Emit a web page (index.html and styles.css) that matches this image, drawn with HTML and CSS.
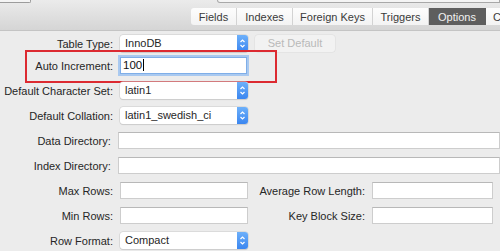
FILE: index.html
```html
<!DOCTYPE html>
<html lang="en">
<head>
  <meta charset="UTF-8">
  <title>Table Options</title>
  <link rel="stylesheet" href="styles.css">
</head>
<body>
  <div class="window">
    <div class="toolbar">
      <div class="toolbar-top">
        <span class="stub stub-left"></span>
        <span class="stub stub-search"></span>
      </div>
      <div class="tabs">
        <span class="tab">Fields</span>
        <span class="tab">Indexes</span>
        <span class="tab">Foreign Keys</span>
        <span class="tab">Triggers</span>
        <span class="tab active">Options</span>
        <span class="tab">CREATE Syntax</span>
      </div>
    </div>

    <div class="form">
      <div class="row row-first">
        <label class="label">Table Type:</label>
        <div class="select">InnoDB<span class="arrows"><svg width="11" height="17" viewBox="0 0 11 17"><path d="M3.5 7 5.5 5 7.5 7M3.5 10 5.5 12 7.5 10" fill="none" stroke="#fff" stroke-width="1.2"/></svg></span></div>
        <span class="button disabled">Set Default</span>
      </div>

      <div class="row highlight">
        <label class="label">Auto Increment:</label>
        <div class="input focus">100<span class="caret"></span></div>
        <span class="mark"></span>
      </div>

      <div class="row">
        <label class="label">Default Character Set:</label>
        <div class="select">latin1<span class="arrows"><svg width="11" height="17" viewBox="0 0 11 17"><path d="M3.5 7 5.5 5 7.5 7M3.5 10 5.5 12 7.5 10" fill="none" stroke="#fff" stroke-width="1.2"/></svg></span></div>
      </div>

      <div class="row">
        <label class="label">Default Collation:</label>
        <div class="select">latin1_swedish_ci<span class="arrows"><svg width="11" height="17" viewBox="0 0 11 17"><path d="M3.5 7 5.5 5 7.5 7M3.5 10 5.5 12 7.5 10" fill="none" stroke="#fff" stroke-width="1.2"/></svg></span></div>
      </div>

      <div class="row">
        <label class="label">Data Directory:</label>
        <div class="input wide"></div>
      </div>

      <div class="row">
        <label class="label">Index Directory:</label>
        <div class="input wide"></div>
      </div>

      <div class="row">
        <label class="label">Max Rows:</label>
        <div class="input"></div>
        <label class="label label-2">Average Row Length:</label>
        <div class="input input-2"></div>
      </div>

      <div class="row">
        <label class="label">Min Rows:</label>
        <div class="input"></div>
        <label class="label label-2">Key Block Size:</label>
        <div class="input input-2"></div>
      </div>

      <div class="row">
        <label class="label">Row Format:</label>
        <div class="select">Compact<span class="arrows"><svg width="11" height="17" viewBox="0 0 11 17"><path d="M3.5 7 5.5 5 7.5 7M3.5 10 5.5 12 7.5 10" fill="none" stroke="#fff" stroke-width="1.2"/></svg></span></div>
      </div>
    </div>
  </div>
</body>
</html>
```

FILE: styles.css
```css
* {
  margin: 0;
  padding: 0;
  box-sizing: border-box;
}
html, body {
  width: 500px;
  height: 251px;
  overflow: hidden;
  background: #ececec;
  font-family: 'Liberation Sans', Arial, sans-serif;
  font-size: 11px;
  color: #262626;
}
.window {
  display: flex;
  flex-direction: column;
  height: 100%;
}
.toolbar {
  height: 31px;
  background: linear-gradient(#ebebeb, #d5d5d5);
  border-bottom: 1px solid #c4c4c4;
  display: flex;
  flex-direction: column;
}
.toolbar-top {
  display: flex;
  height: 3px;
  overflow: hidden;
}
.stub {
  display: block;
  height: 3px;
  border: 1px solid #9c9c9c;
  border-top: none;
  background: #f4f4f4;
}
.stub-left {
  width: 34px;
  margin-left: -2px;
  border-radius: 0 0 2px 0;
}
.stub-search {
  width: 290px;
  margin-left: 186px;
  border-radius: 0 0 0 3px;
  border-color: #a8a8a8;
}
.tabs {
  display: flex;
  margin-top: 5px;
  margin-left: 191px;
  height: 17px;
  white-space: nowrap;
  overflow: hidden;
}
.tab {
  flex-shrink: 0;
  display: flex;
  align-items: center;
  justify-content: center;
  height: 17px;
  background: linear-gradient(#fdfdfd, #f3f3f3);
  border-right: 1px solid #d3d3d3;
  color: #3a3a3a;
  padding: 0 6px;
}
.tab:first-child {
  border-radius: 3px 0 0 3px;
  width: 46px;
}
.tab:nth-child(2) { width: 56px; }
.tab:nth-child(3) { width: 80px; }
.tab:nth-child(4) { width: 56px; }
.tab.active {
  width: 57px;
  background: #5e5e5e;
  color: #f2f2f2;
  border-right-color: #5e5e5e;
}
.tab:last-child {
  justify-content: flex-start;
  padding-left: 7px;
}
.form {
  display: flex;
  flex-direction: column;
  gap: 8px;
  padding-top: 4px;
}
.row {
  display: flex;
  align-items: center;
  height: 17px;
  position: relative;
}
.row-first {
  margin-bottom: -3px;
}
.label {
  width: 113px;
  text-align: right;
  margin-right: 7px;
  white-space: nowrap;
}
.select {
  position: relative;
  width: 128px;
  height: 17px;
  background: #fff;
  border-radius: 3px;
  box-shadow: 0 0 0 0.5px #c9c9c9, 0 1px 1px rgba(0, 0, 0, 0.12);
  padding-left: 5px;
  line-height: 17px;
}
.arrows {
  position: absolute;
  top: 0;
  right: 0;
  width: 11px;
  height: 17px;
  border-radius: 0 3px 3px 0;
  background: linear-gradient(#6db0fa, #3b86f0);
}
.arrows svg {
  display: block;
}
.button {
  margin-left: 7px;
  width: 80px;
  height: 17px;
  border-radius: 3px;
  background: #f2f2f2;
  box-shadow: 0 0 0 0.5px #dcdcdc;
  text-align: center;
  line-height: 17px;
}
.button.disabled {
  color: #b9b9b9;
}
.input {
  width: 128px;
  height: 17px;
  background: #fff;
  border: 1px solid #cdcdcd;
  border-top-color: #b8b8b8;
  padding-left: 2px;
  line-height: 15px;
}
.input.wide {
  width: 390px;
}
.input.focus {
  border: 1px solid #7faee8;
  box-shadow: 0 0 0 2px #a9c9f0;
  width: 127px;
  font-size: 11.5px;
  color: #111;
}
.caret {
  display: inline-block;
  width: 1px;
  height: 12px;
  background: #000;
  vertical-align: -2px;
  margin-left: 1px;
}
.mark {
  position: absolute;
  left: 25px;
  top: -7px;
  width: 252px;
  height: 33px;
  border: 2px solid #dc2a31;
}
.label-2 {
  width: 117px;
  margin-left: 0;
}
.input-2 {
  width: 121px;
}
```
